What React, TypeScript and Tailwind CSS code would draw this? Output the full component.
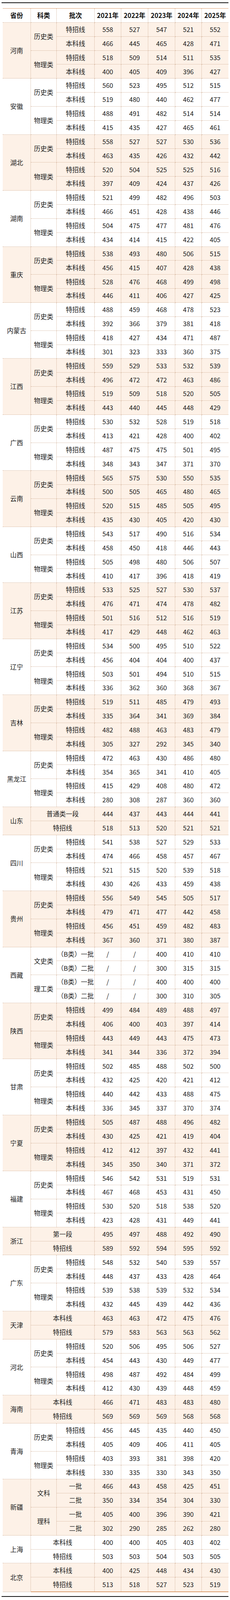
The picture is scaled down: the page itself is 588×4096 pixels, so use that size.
import React from "react";

type Row = { b: string; v: string[] };
type Group = { cat?: string; rows: Row[] };
type Prov = { name: string; groups: Group[] };

const H = (cat: string, a: string, b: string, c = "特招线", d = "本科线"): Group => ({
  cat,
  rows: [
    { b: c, v: a.split(" ") },
    { b: d, v: b.split(" ") },
  ],
});
const std = (name: string, h1: string, h2: string, p1: string, p2: string): Prov => ({
  name,
  groups: [H("历史类", h1, h2), H("物理类", p1, p2)],
});
const two = (name: string, b1: string, v1: string, b2: string, v2: string): Prov => ({
  name,
  groups: [{ rows: [{ b: b1, v: v1.split(" ") }, { b: b2, v: v2.split(" ") }] }],
});

const data: Prov[] = [
  std("河南", "558 527 547 521 552", "466 445 465 428 471", "518 509 514 511 535", "400 405 409 396 427"),
  std("安徽", "560 523 495 512 515", "519 480 440 462 477", "488 491 482 514 514", "415 435 427 465 461"),
  std("湖北", "558 527 527 530 536", "463 435 426 432 442", "520 504 525 525 516", "397 409 424 437 426"),
  std("湖南", "521 499 482 496 503", "466 451 428 438 446", "504 475 477 481 476", "434 414 415 422 405"),
  std("重庆", "538 493 480 506 515", "456 415 407 428 438", "528 476 468 499 498", "446 411 406 427 425"),
  std("内蒙古", "488 459 468 478 523", "392 366 379 381 418", "418 427 434 471 487", "301 323 333 360 375"),
  std("江西", "559 529 533 532 539", "496 472 472 463 486", "519 509 518 520 505", "443 440 445 448 429"),
  std("广西", "530 532 528 519 518", "413 421 428 400 402", "487 475 475 501 495", "348 343 347 371 370"),
  std("云南", "565 575 530 550 535", "500 505 465 480 465", "520 515 485 505 495", "435 430 405 420 430"),
  std("山西", "543 517 490 516 534", "458 450 418 446 443", "505 498 480 506 507", "410 417 396 418 419"),
  std("江苏", "533 525 527 530 537", "476 471 474 478 482", "501 516 512 516 519", "417 429 448 462 463"),
  std("辽宁", "534 500 495 510 522", "456 404 404 400 437", "503 501 494 510 515", "336 362 360 368 367"),
  std("吉林", "519 511 485 479 493", "335 364 341 369 384", "482 488 463 483 479", "305 327 292 345 340"),
  std("黑龙江", "472 463 430 486 480", "354 365 341 410 405", "415 429 408 480 472", "280 308 287 360 360"),
  two("山东", "普通类一段", "444 437 443 444 441", "特招线", "518 513 520 521 521"),
  std("四川", "541 538 527 529 533", "474 466 458 457 467", "521 515 520 539 518", "430 426 433 459 438"),
  std("贵州", "556 549 545 505 517", "479 471 477 442 458", "456 451 459 482 483", "367 360 371 380 387"),
  {
    name: "西藏",
    groups: [
      H("文史类", "/ / 400 410 410", "/ / 300 315 315", "（B类）一批", "（B类）二批"),
      H("理工类", "/ / 400 400 400", "/ / 300 310 305", "（B类）一批", "（B类）二批"),
    ],
  },
  std("陕西", "499 484 489 488 497", "406 400 403 397 414", "443 449 443 475 473", "341 344 336 372 394"),
  std("甘肃", "502 485 488 502 500", "432 425 420 421 412", "440 442 433 488 475", "336 345 337 370 374"),
  std("宁夏", "505 487 488 496 482", "430 425 421 419 404", "412 412 397 432 441", "345 350 340 371 372"),
  std("福建", "546 542 531 519 531", "467 468 453 431 450", "530 520 518 538 520", "423 428 431 449 441"),
  two("浙江", "第一段", "495 497 488 492 490", "特招线", "589 592 594 595 592"),
  std("广东", "548 532 540 539 557", "448 437 433 428 464", "539 538 539 532 534", "432 445 439 442 436"),
  two("天津", "本科线", "463 463 472 475 476", "特招线", "579 583 563 563 562"),
  std("河北", "520 506 495 506 527", "454 443 430 449 477", "498 487 492 484 499", "412 430 439 448 459"),
  two("海南", "本科线", "466 471 483 483 480", "特招线", "569 569 569 568 568"),
  std("青海", "456 445 435 440 450", "405 409 406 411 405", "403 393 381 398 420", "330 335 330 343 350"),
  {
    name: "新疆",
    groups: [
      H("文科", "466 443 458 425 451", "350 334 354 304 330", "一批", "二批"),
      H("理科", "405 400 396 390 421", "302 290 285 262 280", "一批", "二批"),
    ],
  },
  two("上海", "本科线", "400 400 405 403 402", "特招线", "503 503 504 503 505"),
  two("北京", "本科线", "400 425 448 434 430", "特招线", "513 518 527 523 519"),
];

const base = "flex items-center justify-center border-dotted border-[#c9a386] whitespace-nowrap";

function cell(
  key: string,
  text: string,
  opts: { shaded: boolean; right?: boolean; bottom?: boolean; extra?: string }
) {
  const { shaded, right = true, bottom = true, extra = "" } = opts;
  return (
    <div
      key={key}
      className={[
        base,
        shaded ? "bg-[#fdf1e7]" : "bg-white",
        right ? "border-r" : "",
        bottom ? "border-b" : "",
        extra,
      ].join(" ")}
    >
      {text}
    </div>
  );
}

export default function App() {
  const years = ["2021年", "2022年", "2023年", "2024年", "2025年"];
  const cells: React.ReactNode[] = [];
  data.forEach((p, pi) => {
    const shaded = pi % 2 === 0;
    const isLastProv = pi === data.length - 1;
    const total = p.groups.reduce((s, g) => s + g.rows.length, 0);
    cells.push(
      cell(`p${pi}`, p.name, {
        shaded,
        bottom: !isLastProv,
        extra: total === 4 ? "row-span-4" : "row-span-2",
      })
    );
    p.groups.forEach((g, gi) => {
      const lastGroup = gi === p.groups.length - 1;
      g.rows.forEach((r, ri) => {
        const lastRow = isLastProv && lastGroup && ri === g.rows.length - 1;
        if (g.cat && ri === 0) {
          cells.push(
            cell(`c${pi}-${gi}`, g.cat, {
              shaded,
              bottom: !(isLastProv && lastGroup),
              extra: "row-span-2",
            })
          );
        }
        cells.push(
          cell(`b${pi}-${gi}-${ri}`, r.b, {
            shaded,
            bottom: !lastRow,
            extra: g.cat ? "" : "col-span-2",
          })
        );
        r.v.forEach((v, vi) => {
          cells.push(
            cell(`v${pi}-${gi}-${ri}-${vi}`, v, {
              shaded,
              bottom: !lastRow,
              right: vi !== 4,
            })
          );
        });
      });
    });
  });

  return (
    <div
      className="w-[588px] bg-white text-[#1c1c1c] text-[16.5px] leading-none"
      style={{ fontFamily: '"Noto Sans CJK SC", "Noto Sans", sans-serif' }}
    >
      <div className="pt-[6px] px-[4px]">
        <div className="h-[2px] bg-[#111111]" />
      </div>
      <div className="ml-[7px] w-[577px] mt-[12.5px]">
        <div className="h-[1.5px] bg-[#dc9f70]" />
        <div className="grid grid-cols-[72px_66px_97px_68px_69px_69px_68px_68px] auto-rows-[35.86px]">
          {["省份", "科类", "批次", ...years].map((h, i) =>
            cell(`h${i}`, h, { shaded: false, right: i !== 7, extra: "font-bold text-[#111111]" })
          )}
          {cells}
        </div>
        <div className="flex h-[1.5px]">
          <div className="w-[72px] bg-[#eadfd5]" />
          <div className="flex-1 bg-[#dc9f70]" />
        </div>
      </div>
      <div className="px-[4px] pt-[10px] pb-[9px]">
        <div className="h-[2px] bg-[#111111]" />
      </div>
    </div>
  );
}
